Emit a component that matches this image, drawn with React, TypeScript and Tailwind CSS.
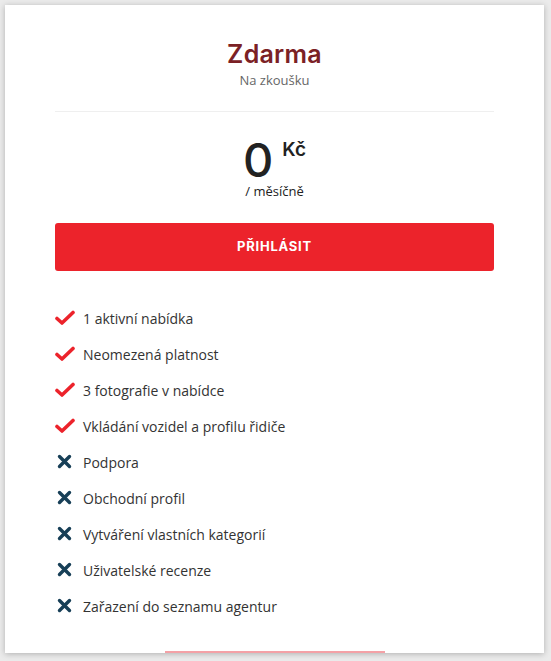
import React from 'react';

const features: { label: string; included: boolean }[] = [
  { label: '1 aktivní nabídka', included: true },
  { label: 'Neomezená platnost', included: true },
  { label: '3 fotografie v nabídce', included: true },
  { label: 'Vkládání vozidel a profilu řidiče', included: true },
  { label: 'Podpora', included: false },
  { label: 'Obchodní profil', included: false },
  { label: 'Vytváření vlastních kategorií', included: false },
  { label: 'Uživatelské recenze', included: false },
  { label: 'Zařazení do seznamu agentur', included: false },
];

function CheckIcon() {
  return (
    <svg width="20" height="16" viewBox="0 0 20 16" fill="none">
      <polyline points="2,8.5 7,13 18,2.5" stroke="#ec232b" strokeWidth="3.6" strokeLinecap="round" strokeLinejoin="round" />
    </svg>
  );
}

function CrossIcon() {
  return (
    <svg width="20" height="16" viewBox="0 0 20 16" fill="none">
      <path d="M4.5 2.5 L14.5 12.5 M14.5 2.5 L4.5 12.5" stroke="#173f57" strokeWidth="3.4" strokeLinecap="round" />
    </svg>
  );
}

export default function App() {
  return (
    <div className="min-h-screen bg-[#ebebeb] pt-[5px] pl-[5px]">
      <div className="w-[539px] h-[648px] bg-white shadow-[0_1px_6px_rgba(0,0,0,0.25)] flex flex-col px-[50px] pt-[33px] overflow-hidden">
        {/* Header */}
        <h2 className="text-center text-[25px] leading-[32px] font-semibold tracking-[0.01em] text-[#7b2125] font-['Inter',sans-serif]">
          Zdarma
        </h2>
        <p className="text-center text-[13px] leading-[18px] text-[#666] mt-[1px] font-['Open_Sans',sans-serif]">
          Na zkoušku
        </p>
        <div className="mt-[22px] border-t border-[#efefef]" />

        {/* Price */}
        <div className="mt-[25px] flex justify-center items-start h-[46px] font-['Inter',sans-serif] text-[#222]">
          <span className="text-[47px] leading-[46px] font-medium">0</span>
          <span className="text-[19px] leading-[19px] font-semibold ml-[9px] mt-[3px]">Kč</span>
        </div>
        <p className="text-center text-[13px] leading-[16px] text-[#222] font-['Open_Sans',sans-serif]">
          / měsíčně
        </p>

        {/* Button */}
        <button className="mt-[24px] h-[48px] w-full rounded-[3px] bg-[#ec232b] text-white text-[13px] font-bold tracking-[0.06em] font-['Inter',sans-serif]">
          PŘIHLÁSIT
        </button>

        {/* Features */}
        <ul className="mt-[29px] font-['Open_Sans',sans-serif]">
          {features.map((f) => (
            <li key={f.label} className="flex items-center h-[36px]">
              <span className="w-[20px] mr-[8px] flex justify-center">
                {f.included ? <CheckIcon /> : <CrossIcon />}
              </span>
              <span className="text-[14px] text-[#333]">{f.label}</span>
            </li>
          ))}
        </ul>

        <div className="mt-auto mx-auto w-[220px] h-[2px] bg-[#f4a1a6]" />
      </div>
    </div>
  );
}
